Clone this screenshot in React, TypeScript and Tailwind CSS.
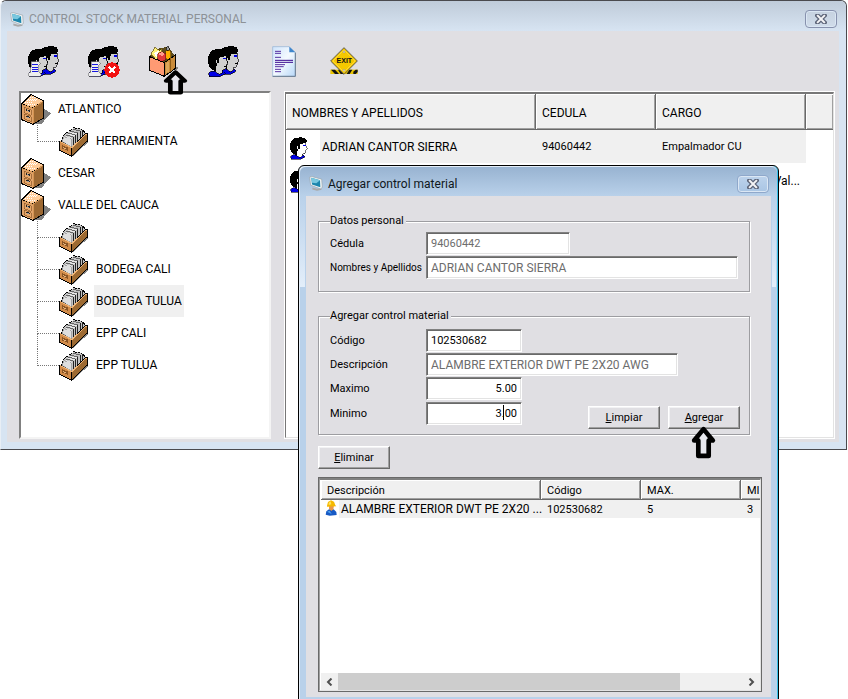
import type { ReactNode } from "react";

function MonitorIcon() {
  return (
    <svg viewBox="0 0 42 44" className="h-[15px] w-[14px] shrink-0" aria-hidden="true">
      <path d="M10 34 L24 38 L36 36 L38 41 L24 44 L10 40Z" fill="#a9a9a9" />
      <path d="M2 3 L8 1 L38 9 L40 34 L34 38 L5 27Z" fill="#f2f4f5" stroke="#9aa4aa" strokeWidth="2" />
      <path d="M7 5 L33 12 L34 33 L9 25Z" fill="#1c86ad" />
      <path d="M7 5 L33 12 L22 21 L9 20Z" fill="#79c8df" />
    </svg>
  );
}

function CloseIcon() {
  return (
    <svg viewBox="0 0 12 10" className="h-[10px] w-3" aria-hidden="true">
      <path d="M2.500 1.500 L9.500 8.500 M9.500 1.500 L2.500 8.500" stroke="#5c6478" strokeWidth="4.500" strokeLinecap="square" />
      <path d="M2.800 1.800 L9.200 8.200 M9.200 1.800 L2.800 8.200" stroke="#f4f4f6" strokeWidth="2" strokeLinecap="square" />
    </svg>
  );
}

function Head({ fill }: { fill: string }) {
  return (
    <>
      <path d="M2 84 L10 78 L26 80 L40 84 L46 80 L52 86 L36 95 L4 95Z" fill="#0000e6" stroke="#000" strokeWidth="2" />
      <path d="M22 40 L34 32 L54 32 L54 42 L60 56 L55 60 L55 68 L50 74 L42 76 L42 84 L34 88 L24 82 L20 66Z" fill={fill} stroke="#000" strokeWidth="2" />
      <path d="M0 38 L6 22 L16 14 L40 11 L54 16 L58 26 L53 34 L36 36 L33 44 L34 54 L29 54 L26 46 L24 48 L27 62 L23 68 L25 80 L10 73 L2 62Z" fill="#000" />
      <path d="M46 39h8v4h-8z" fill="#0000e6" />
      <path d="M49 62h7v3h-7z" fill="#000" />
    </>
  );
}

function People({ children }: { children?: ReactNode }) {
  return (
    <svg viewBox="0 0 96 99" className="h-[33px] w-8" shapeRendering="crispEdges" aria-hidden="true">
      <g transform="translate(33 -8)">
        <Head fill="#d0d0d0" />
      </g>
      <Head fill="#d0d0d0" />
      {children}
    </svg>
  );
}

function Scroll() {
  return (
    <>
      <path d="M10 50 L34 50 L38 56 L32 60 L32 82 L40 88 L36 94 L4 94 L-1 86 L8 82Z" fill="#eee" stroke="#777" strokeWidth="2" />
      <path d="M13 59h17M13 66h17M13 73h17M13 80h17" stroke="#1717df" strokeWidth="3" />
    </>
  );
}

function PersonIcon() {
  return (
    <svg viewBox="0 10 62 88" className="h-[23px] w-[18px]" preserveAspectRatio="none" shapeRendering="crispEdges" aria-hidden="true">
      <Head fill="#fff" />
    </svg>
  );
}

function ToolboxIcon() {
  return (
    <svg viewBox="0 0 90 93" className="h-[31px] w-[30px]" shapeRendering="crispEdges" aria-hidden="true">
      <path d="M78 62 L90 66 L78 76Z" fill="#888" />
      <path d="M2 32 L16 10 L58 2 L78 30 L42 50Z" fill="#5c4a1c" />
      <path d="M6 24 L18 4 L32 14 L38 6 L40 26 L22 42Z" fill="#fff27a" stroke="#554400" strokeWidth="2" />
      <path d="M14 22 L30 14 L24 34Z" fill="#fff" />
      <path d="M50 16 L62 10 L66 24 L64 42 L50 38Z" fill="#ffb000" stroke="#6b4700" strokeWidth="2" />
      <path d="M51 6 L57 1 L62 7 L60 13 L53 13Z" fill="#999" stroke="#000" strokeWidth="2" />
      <path d="M26 24 L38 17 L50 24 L50 40 L38 48 L27 40Z" fill="#e33b3b" stroke="#701414" strokeWidth="2" />
      <path d="M27 24 L38 18 L49 24 L39 30Z" fill="#ff9d8c" />
      <path d="M2 32 L46 50 L46 91 L2 73Z" fill="#ff9a73" stroke="#000" strokeWidth="3" />
      <path d="M46 50 L78 28 L78 68 L46 91Z" fill="#c98b3a" stroke="#000" strokeWidth="3" />
      <path d="M62 38 L66 36 L66 76 L62 78Z" fill="#8d5b17" />
      <path d="M50 52 L60 46 L60 76 L50 83Z" fill="#dda75a" />
    </svg>
  );
}

function DocIcon() {
  return (
    <svg viewBox="0 0 72 93" className="h-[31px] w-6" aria-hidden="true">
      <defs>
        <linearGradient id="sheet" x1="0" y1="0" x2="1" y2="1">
          <stop offset="0" stopColor="#cfe4fb" />
          <stop offset=".5" stopColor="#f4faff" />
          <stop offset="1" stopColor="#b7d7f8" />
        </linearGradient>
      </defs>
      <path d="M2 2 H52 L70 20 V91 H2Z" fill="url(#sheet)" stroke="#8fb0d4" strokeWidth="2" />
      <path d="M70 20 V91 H2" fill="none" stroke="#68798c" strokeWidth="3" />
      <path d="M52 2 V19 H70Z" fill="#3f86cc" />
      <path d="M9 16h18M9 22h18M9 34h18M9 70h18M9 77h18" stroke="#3a0a90" strokeWidth="2.500" />
      <path d="M9 43h54M9 49h54" stroke="#3a0a90" strokeWidth="3" />
      <path d="M9 56h30M9 62h26" stroke="#3a0a90" strokeWidth="2.500" />
    </svg>
  );
}

function ExitIcon() {
  return (
    <svg viewBox="0 0 84 84" className="h-7 w-7" aria-hidden="true">
      <path d="M1 68h82v13H1z" fill="#e9c400" />
      <path d="M3 68h12l12 13h-12zM24 68h9l8 13h-9zM50 81l8-13h9l-8 13zM70 81V74l7-6h6v7l-6 6z" fill="#111" />
      <path d="M42 2 L82 42 L42 82 L2 42Z" fill="#f5c800" stroke="#5f5a48" strokeWidth="3" />
      <path d="M42 9 L75 42 L42 75 L9 42Z" fill="none" stroke="#ffe04d" strokeWidth="2" />
      <circle cx="42" cy="15" r="3" fill="#ddd" stroke="#777" />
      <circle cx="42" cy="70" r="3" fill="#ddd" stroke="#777" />
      <text x="43" y="49" textAnchor="middle" fontSize="21" fontWeight="700" fontFamily="Liberation Sans" fill="#111">EXIT</text>
    </svg>
  );
}

function CabinetIcon() {
  return (
    <svg viewBox="0 0 90 93" className="h-[31px] w-[30px]" shapeRendering="crispEdges" aria-hidden="true">
      <path d="M68 44 L90 58 L60 91 L38 91Z" fill="#808080" />
      <path d="M2 30 L36 42 L36 91 L2 77Z" fill="#e0a268" stroke="#000" strokeWidth="3" />
      <path d="M36 42 L68 20 L68 72 L36 91Z" fill="#9c6832" stroke="#000" strokeWidth="3" />
      <path d="M2 30 L30 2 L68 20 L36 42Z" fill="#ffcc99" stroke="#000" strokeWidth="3" />
      <path d="M36 44 V88 M4 32 L36 43 L66 22" fill="none" stroke="#d39352" strokeWidth="3" />
      <path d="M12 25h22M17 20h28M22 15h28M26 9h16M20 30h22" stroke="#fff" strokeWidth="3" strokeDasharray="3 3" />
      <path d="M9 40 L31 48 L31 64 L9 56Z M9 60 L31 68 L31 83 L9 74Z" fill="#e7a76a" stroke="#8a5524" strokeWidth="2" />
      <path d="M15 46l12 4v5l-12-4zM15 65l12 4v5l-12-4z" fill="#222" />
      <path d="M17 49l7 3M17 68l7 3" stroke="#ddd" strokeWidth="2" />
    </svg>
  );
}

function CardBoxIcon() {
  return (
    <svg viewBox="0 0 87 90" className="h-[30px] w-[29px]" shapeRendering="crispEdges" aria-hidden="true">
      <path d="M40 89 L87 46 L87 30 L40 80Z" fill="#888" />
      <path d="M8 44 L12 26 L44 2 L66 6 L76 14 L82 24 L40 64Z" fill="#c4c4c4" stroke="#000" strokeWidth="3" strokeDasharray="6 2" />
      <path d="M10 44 L14 29 L38 34 L38 60Z" fill="#dedede" stroke="#888" strokeWidth="2" />
      <path d="M42 29 L44 55M49 23 L50 50M56 17 L57 44M63 12 L64 38M69 9 L71 32" fill="none" stroke="#222" strokeWidth="3" />
      <path d="M20 24 L42 29M27 18 L49 23M34 13 L56 17M41 7 L63 12" fill="none" stroke="#666" strokeWidth="3" />
      <path d="M20 29l20 5M27 22l20 5M34 17l20 4" stroke="#fff" strokeWidth="2" />
      <path d="M1 42 L38 62 L38 88 L1 70Z" fill="#d18b49" stroke="#000" strokeWidth="3" />
      <path d="M38 62 L78 21 L85 20 L85 42 L38 88Z" fill="#9d6a32" stroke="#000" strokeWidth="3" />
      <path d="M3 43 L38 62 L82 21" fill="none" stroke="#f0b475" strokeWidth="3" />
      <path d="M9 54l18 8v10L9 64z" fill="#8a5524" />
      <path d="M13 60l9 4v4l-9-4z" fill="#e6b27c" />
    </svg>
  );
}

function WorkerIcon() {
  return (
    <svg viewBox="0 0 36 48" className="h-4 w-3" aria-hidden="true">
      <path d="M2 44 L4 34 L12 28 L26 28 L34 36 L35 45 L14 47Z" fill="#1759c4" />
      <path d="M6 35l8-3 6 10z" fill="#4fa2ef" />
      <path d="M12 16h15l-2 12-6 5-7-6z" fill="#e8984b" />
      <path d="M6 17 L9 6 L18 1 L27 5 L31 16 L34 19 L6 20Z" fill="#f5b800" />
      <path d="M11 8l6-4 2 9-8 2z" fill="#ffe25c" />
    </svg>
  );
}

function UpArrow({ className }: { className: string }) {
  return (
    <svg viewBox="0 0 26 34" preserveAspectRatio="none" className={className} aria-hidden="true">
      <path d="M13 4 L22 15 H18 V30 H8 V15 H4Z" fill="#e8e8ee" stroke="#000" strokeWidth="4.500" strokeLinejoin="round" />
    </svg>
  );
}

function CloseButton({ active }: { active?: boolean }) {
  const tone = active
    ? "border-[#8fa8cb] bg-gradient-to-b from-[#bdd3ec] to-[#a9c5e4]"
    : "border-[#8791ad] bg-gradient-to-b from-[#c6d2e0] to-[#d0dcea]";
  return (
    <button type="button" aria-label="Cerrar" className={`flex h-[18px] w-8 items-center justify-center rounded-sm border shadow-[inset_0_0_0_1px_#dbe7f4] ${tone}`}>
      <CloseIcon />
    </button>
  );
}

function TreeChild({ name, selected, last }: { name: string; selected?: boolean; last?: boolean }) {
  return (
    <li className="flex h-8 pl-4">
      <div className="w-[22px] shrink-0">
        <div className="h-[17px] border-b border-l border-dotted border-[#777]" />
        {!last && <div className="h-[15px] border-l border-dotted border-[#777]" />}
      </div>
      <div className="pt-0.5">
        <CardBoxIcon />
      </div>
      {name && <span className={`ml-1.5 px-0.5 leading-8 ${selected ? "bg-[#f0f0f0]" : ""}`}>{name}</span>}
    </li>
  );
}

function TreeRoot({ name, children }: { name: string; children?: ReactNode }) {
  return (
    <li>
      <div className="flex h-8 items-center">
        <CabinetIcon />
        <span className="ml-[7px]">{name}</span>
      </div>
      {children && <ul>{children}</ul>}
    </li>
  );
}

const th =
  "border-r border-b border-[#696969] bg-[#f0f0f0] p-0 pt-0.5 pl-1.5 text-left font-normal shadow-[inset_1px_1px_0_#fff,inset_-1px_-1px_0_#a0a0a0]";
const sunken =
  "h-[23px] border border-t-[#808080] border-r-white border-b-white border-l-[#808080] bg-white px-1 shadow-[inset_1px_1px_0_#696969,inset_-1px_-1px_0_#e3e3e3] outline-none";
const group =
  "w-full min-w-0 border border-[#9d9da1] px-[11px] shadow-[1px_1px_0_#fff,inset_1px_1px_0_#fff]";

type FieldProps = {
  id: string;
  label: string;
  value: string;
  width: string;
  muted?: boolean;
  right?: boolean;
  caps?: boolean;
  small?: boolean;
};

function Field({ id, label, value, width, muted, right, caps, small }: FieldProps) {
  return (
    <div className="flex h-6 items-start">
      <label htmlFor={id} className={`w-24 shrink-0 leading-6 whitespace-nowrap ${small ? "text-[10px]" : ""}`}>{label}</label>
      <input
        id={id}
        defaultValue={value}
        readOnly={muted}
        className={`${sunken} ${width} ${muted ? "text-[#6d6d6d]" : "text-black"} ${right ? "text-right" : ""} ${caps ? "text-xs" : ""}`}
      />
    </div>
  );
}

function PushButton({ hot, rest }: { hot: string; rest: string }) {
  return (
    <button type="button" className="h-[23px] w-[72px] border border-t-white border-r-[#696969] border-b-[#696969] border-l-white bg-[#e0dfe3] pt-px text-center leading-5 shadow-[inset_-1px_-1px_0_#a0a0a0,inset_1px_1px_0_#f2f2f4]">
      <u className="underline-offset-1">{hot}</u>
      {rest}
    </button>
  );
}

function ToolButton({ label, children }: { label: string; children: ReactNode }) {
  return (
    <button type="button" aria-label={label} className="flex h-[34px] w-[34px] items-center justify-center">
      {children}
    </button>
  );
}

export default function App() {
  return (
    <div className="relative h-screen overflow-hidden bg-white font-['Roboto','Liberation_Sans',sans-serif] text-[11px] leading-4 text-black">
      <main className="mr-px flex h-[450px] flex-col rounded-t-md border border-[#4a4a4e] border-l-[#e8eef5] bg-[#d7e4f2] pr-[7px] pb-[7px] pl-1.5">
        <header className="-mr-[7px] -ml-1.5 flex h-[30px] shrink-0 items-center justify-between rounded-t-md bg-gradient-to-b from-[#bfcbd9] to-[#d7e4f2] px-[9px] pt-1.5">
          <div className="flex items-center gap-[5px]">
            <MonitorIcon />
            <h1 className="text-xs text-[#8d9297]">CONTROL STOCK MATERIAL PERSONAL</h1>
          </div>
          <CloseButton />
        </header>
        <div className="flex min-h-0 flex-1 flex-col bg-[#e0dfe3] pr-1 pb-[3px] pl-3">
          <div className="flex h-[60px] shrink-0 gap-[26px] pt-[13px] pl-2">
            <ToolButton label="Ver personal">
              <People><Scroll /></People>
            </ToolButton>
            <ToolButton label="Quitar personal">
              <People>
                <Scroll />
                <circle cx="72" cy="75" r="23" fill="#f21212" />
                <path d="M63 66l18 18M81 66l-18 18" stroke="#fff" strokeWidth="5" />
              </People>
            </ToolButton>
            <ToolButton label="Agregar material"><ToolboxIcon /></ToolButton>
            <ToolButton label="Personal"><People /></ToolButton>
            <ToolButton label="Reporte"><DocIcon /></ToolButton>
            <ToolButton label="Salir"><ExitIcon /></ToolButton>
          </div>
          <div className="flex min-h-0 flex-1 gap-[13px] text-xs">
            <ul className="w-[252px] shrink-0 border-2 border-t-[#808080] border-r-[#f4f4f4] border-b-[#f4f4f4] border-l-[#808080] bg-white">
              <TreeRoot name="ATLANTICO">
                <TreeChild name="HERRAMIENTA" last />
              </TreeRoot>
              <TreeRoot name="CESAR" />
              <TreeRoot name="VALLE DEL CAUCA">
                <TreeChild name="" />
                <TreeChild name="BODEGA CALI" />
                <TreeChild name="BODEGA TULUA" selected />
                <TreeChild name="EPP CALI" />
                <TreeChild name="EPP TULUA" last />
              </TreeRoot>
            </ul>
            <div className="min-w-0 flex-1 border border-white">
              <div className="h-full border-t-2 border-r border-b border-l border-t-[#777] border-r-[#e3e3e3] border-b-[#e3e3e3] border-l-[#777] bg-white">
                <table className="w-full table-fixed border-separate border-spacing-0">
                  <thead>
                    <tr className="h-9">
                      <th className={`${th} w-[250px]`}>NOMBRES Y APELLIDOS</th>
                      <th className={`${th} w-[120px]`}>CEDULA</th>
                      <th className={`${th} w-[150px]`}>CARGO</th>
                      <th className={`${th} border-r-0`} aria-label="Otros" />
                    </tr>
                  </thead>
                  <tbody>
                    <tr className="h-[33px]">
                      <td className="p-0">
                        <div className="flex h-[33px] items-center">
                          <div className="w-[34px] shrink-0 pt-1 pl-1"><PersonIcon /></div>
                          <div className="h-full flex-1 bg-[#f0f0f0] pt-px pl-0.5 leading-8">ADRIAN CANTOR SIERRA</div>
                        </div>
                      </td>
                      <td className="bg-[#f0f0f0] p-0 pt-0.5 pl-1.5 text-[11px]">94060442</td>
                      <td className="bg-[#f0f0f0] p-0 pt-0.5 pl-1.5 text-[11px]">Empalmador CU</td>
                      <td />
                    </tr>
                    <tr className="h-[33px]">
                      <td className="p-0"><div className="pt-1 pl-1"><PersonIcon /></div></td>
                      <td />
                      <td className="p-0 pt-0.5 pr-1.5 text-right">Val...</td>
                      <td />
                    </tr>
                  </tbody>
                </table>
              </div>
            </div>
          </div>
        </div>
      </main>

      <UpArrow className="absolute top-[69px] left-[162px] h-[27px] w-[27px]" />

      <section
        role="dialog"
        aria-labelledby="dialog-title"
        className="absolute top-[165px] left-[298px] w-[481px] rounded-t-md border border-black bg-[#b9d1ea] px-[7px] pb-[7px] shadow-[inset_-1px_0_0_#35c0e8,inset_1px_1px_0_#e4eef8]"
      >
        <div className="absolute top-[30px] left-px h-[91px] w-[5px] bg-gradient-to-b from-transparent to-[#e3eefa]" />
        <div className="absolute top-[30px] right-[2px] h-[91px] w-1 bg-gradient-to-b from-transparent to-[#e3eefa]" />
        <header className="-mx-1.5 mt-px flex h-[29px] items-center justify-between rounded-t-md bg-gradient-to-b from-[#98b3d1] to-[#b9d1ea] px-2 pt-1">
          <div className="flex items-center gap-[5px] pl-px">
            <MonitorIcon />
            <h2 id="dialog-title" className="text-xs text-[#101820]">Agregar control material</h2>
          </div>
          <CloseButton active />
        </header>
        <div className="bg-[#e0dfe3] px-3 pt-[17px] pb-[5px]">
          <div className="pr-[9px]">
            <fieldset className={`${group} h-[79px]`}>
              <legend className="bg-[#e0dfe3] pr-0.5">Datos personal</legend>
              <div className="pt-[3px]">
                <Field id="cedula" label="Cédula" value="94060442" width="w-36" muted />
                <Field id="nombres" label="Nombres y Apellidos" value="ADRIAN CANTOR SIERRA" width="w-[312px]" muted caps small />
              </div>
            </fieldset>
            <fieldset className={`${group} mt-4 h-[127px]`}>
              <legend className="bg-[#e0dfe3] pr-0.5">Agregar control material</legend>
              <div className="flex items-end justify-between pt-[5px]">
                <div>
                  <Field id="codigo" label="Código" value="102530682" width="w-24" />
                  <Field id="descripcion" label="Descripción" value="ALAMBRE EXTERIOR DWT PE 2X20 AWG" width="w-[252px]" muted caps />
                  <Field id="maximo" label="Maximo" value="5.00" width="w-24" right />
                  <div className="relative w-48 pt-px">
                    <Field id="minimo" label="Minimo" value="3.00" width="w-24" right />
                    <span className="absolute top-1 right-[18px] h-[15px] w-px bg-black" />
                  </div>
                </div>
                <div className="-mb-[3px] -ml-[90px] flex gap-2">
                  <PushButton hot="L" rest="impiar" />
                  <PushButton hot="A" rest="gregar" />
                </div>
              </div>
            </fieldset>
          </div>
          <div className="mt-[11px]">
            <PushButton hot="E" rest="liminar" />
          </div>
          <div className="mt-2 mr-[-3px] w-[444px] border border-[#696969] bg-white">
            <div className="border border-t-2 border-t-[#808080] border-r-[#e3e3e3] border-b-[#e3e3e3] border-l-[#a0a0a0] pl-px">
              <div className="h-[193px] overflow-hidden">
                <table className="w-[520px] table-fixed border-separate border-spacing-0">
                  <thead>
                    <tr className="h-5">
                      <th className={`${th} w-[220px]`}>Descripción</th>
                      <th className={`${th} w-[100px]`}>Código</th>
                      <th className={`${th} w-[100px]`}>MAX.</th>
                      <th className={`${th} w-[100px]`}>MI</th>
                    </tr>
                  </thead>
                  <tbody className="leading-[17px]">
                    <tr>
                      <td className="p-0">
                        <div className="flex h-[18px]">
                          <div className="w-[18px] shrink-0 pl-1"><WorkerIcon /></div>
                          <div className="flex-1 bg-[#f0f0f0] pl-0.5 text-xs leading-[18px] whitespace-nowrap">ALAMBRE EXTERIOR DWT PE 2X20 ...</div>
                        </div>
                      </td>
                      <td className="bg-[#f0f0f0] p-0 pl-1.5">102530682</td>
                      <td className="bg-[#f0f0f0] p-0 pl-1.5">5</td>
                      <td className="bg-[#f0f0f0] p-0 pl-1.5">3</td>
                    </tr>
                  </tbody>
                </table>
              </div>
              <div className="flex h-[17px] bg-[#f0f0f0]">
                <button type="button" aria-label="Desplazar a la izquierda" className="flex w-[17px] items-center justify-center">
                  <svg viewBox="0 0 7 8" className="h-2 w-[7px]" aria-hidden="true"><path d="M5.500 .5 L2 4 L5.500 7.500" fill="none" stroke="#505050" strokeWidth="2" /></svg>
                </button>
                <div className="flex-1"><div className="h-full w-[342px] bg-[#cdcdcd]" /></div>
                <button type="button" aria-label="Desplazar a la derecha" className="flex w-[17px] items-center justify-center">
                  <svg viewBox="0 0 7 8" className="h-2 w-[7px]" aria-hidden="true"><path d="M1.500 .5 L5 4 L1.500 7.500" fill="none" stroke="#505050" strokeWidth="2" /></svg>
                </button>
              </div>
            </div>
          </div>
        </div>
      </section>

      <UpArrow className="absolute top-[425px] left-[690px] h-[35px] w-[27px]" />
    </div>
  );
}
